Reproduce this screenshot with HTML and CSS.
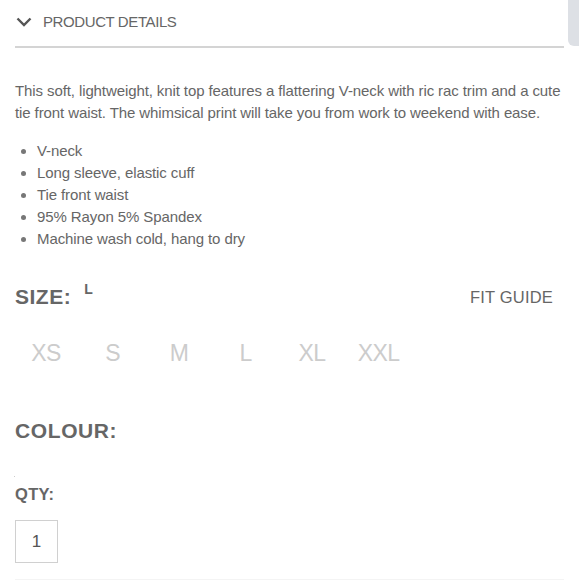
FILE: index.html
```html
<!DOCTYPE html>
<html>
<head>
<meta charset="utf-8">
<link rel="stylesheet" href="styles.css">
</head>
<body>
<div class="page">
  <div class="details-head">
    <svg class="chev" width="16" height="10" viewBox="0 0 16 10"><path d="M1.5 1.5 L8 8 L14.5 1.5" fill="none" stroke="#555" stroke-width="2.4"/></svg>
    <span class="head-title">PRODUCT DETAILS</span>
  </div>
  <p class="desc">This soft, lightweight, knit top features a flattering V-neck with ric rac trim and a cute tie front waist. The whimsical print will take you from work to weekend with ease.</p>
  <ul class="features">
    <li>V-neck</li>
    <li>Long sleeve, elastic cuff</li>
    <li>Tie front waist</li>
    <li>95% Rayon 5% Spandex</li>
    <li>Machine wash cold, hang to dry</li>
  </ul>
  <div class="size-row">
    <div class="size-label"><span class="label">SIZE:</span><span class="sel">L</span></div>
    <span class="fit">FIT GUIDE</span>
  </div>
  <div class="sizes">
    <span class="sz">XS</span>
    <span class="sz">S</span>
    <span class="sz">M</span>
    <span class="sz">L</span>
    <span class="sz">XL</span>
    <span class="sz">XXL</span>
  </div>
  <div class="colour">COLOUR:</div>
  <div class="dot"></div>
  <div class="qty">QTY:</div>
  <div class="qty-box">1</div>
</div>
<div class="scroll-tab"></div>
</body>
</html>
```
FILE: styles.css
```css
html, body { margin: 0; padding: 0; background: #fff; }
body {
  font-family: "Liberation Sans", Arial, sans-serif;
  color: #666;
  width: 579px;
  height: 580px;
  overflow: hidden;
  position: relative;
}
.page {
  margin: 0 15px;
  width: 549px;
  height: 579px;
  border-bottom: 1px solid #f4f4f4;
}
.details-head {
  display: flex;
  align-items: center;
  height: 43px;
  border-bottom: 2px solid #d4d4d4;
  padding-bottom: 3px;
}
.chev { margin-left: 1px; }
.head-title {
  margin-left: 11px;
  font-size: 15px;
  letter-spacing: -0.4px;
  color: #666;
}
.desc {
  margin: 32px -10px 0 0;
  font-size: 15px;
  line-height: 22px;
  letter-spacing: -0.1px;
  color: #666;
}
.features {
  margin: 16px 0 0;
  padding-left: 22px;
  font-size: 15px;
  line-height: 22px;
  letter-spacing: -0.1px;
}
.features li::marker { color: #777; }
.size-row {
  display: flex;
  justify-content: space-between;
  align-items: flex-start;
  margin-top: 34px;
  padding-right: 11px;
}
.size-label { display: flex; align-items: flex-start; }
.label {
  font-size: 21px;
  font-weight: bold;
  line-height: 26px;
  letter-spacing: 0.5px;
  color: #666;
}
.sel {
  font-size: 14px;
  margin-left: 13px;
  line-height: 14px;
  font-weight: bold;
  color: #666;
  margin-top: -2px;
}
.fit {
  font-size: 16.5px;
  line-height: 26px;
  letter-spacing: 0.2px;
  color: #666;
}
.sizes {
  display: flex;
  gap: 4.5px;
  margin-top: 30px;
}
.sz {
  width: 62px;
  text-align: center;
  font-size: 23px;
  line-height: 26px;
  color: #ccc;
  letter-spacing: -0.6px;
  font-weight: 300;
}
.colour {
  margin-top: 52px;
  font-size: 21px;
  font-weight: bold;
  line-height: 26px;
  letter-spacing: 0.6px;
}
.dot {
  width: 1px;
  height: 1px;
  background: #ccc;
  margin: 32px 0 0 -1px;
}
.qty {
  margin-top: 8px;
  font-size: 16.5px;
  font-weight: bold;
  line-height: 18px;
  letter-spacing: 0.3px;
}
.qty-box {
  margin-top: 17px;
  width: 41px;
  height: 41px;
  border: 1px solid #d0d0d0;
  display: flex;
  align-items: center;
  justify-content: center;
  font-size: 17px;
  color: #555;
}
.scroll-tab {
  position: absolute;
  top: 0;
  right: 0;
  width: 11px;
  height: 46px;
  background: #dde0e5;
  border-bottom-left-radius: 6px;
}
```
